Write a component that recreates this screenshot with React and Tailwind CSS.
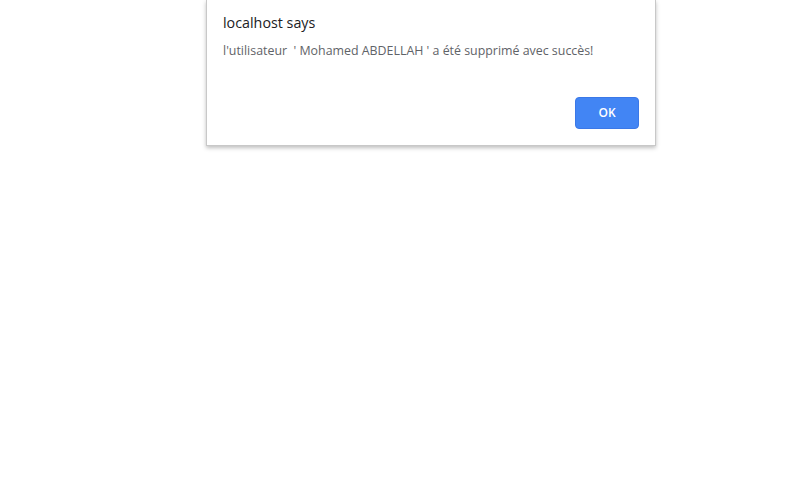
export default function App() {
  return (
    <div className="w-[805px] h-[499px] bg-white relative overflow-hidden" style={{ fontFamily: '"Open Sans", "Noto Sans", sans-serif' }}>
      <div className="ml-[206px] w-[450px] h-[146px] bg-white border border-t-0 border-[#c8c8c8] shadow-[0_2px_4px_rgba(0,0,0,0.25)] flex flex-col">
        <div className="pl-[16px] pt-[13px] text-[14.3px] leading-[20px] text-[#202124]">localhost says</div>
        <div className="pl-[16px] pt-[9px] text-[12.4px] leading-[17px] text-[#5f6368]">
          l'utilisateur&nbsp;&nbsp;' Mohamed ABDELLAH ' a été supprimé avec succès!
        </div>
        <div className="flex-1 flex justify-end items-end pr-[16px] pb-[16px]">
          <button className="w-[64px] h-[32px] rounded-[4px] bg-[#4285f4] text-white text-[12px] font-semibold border border-[#3b78e7]">
            OK
          </button>
        </div>
      </div>
    </div>
  );
}
